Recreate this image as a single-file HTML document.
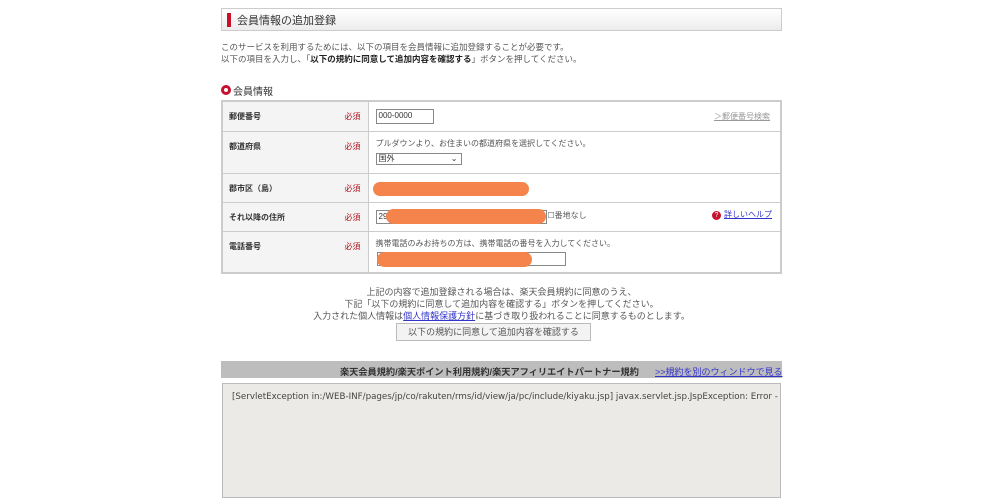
<!DOCTYPE html>
<html><head><meta charset="utf-8"><style>
*{margin:0;padding:0;box-sizing:border-box}
body{width:1000px;height:493px;background:#fff;position:relative;overflow:hidden;font-family:"Liberation Sans","Noto Sans CJK JP",sans-serif;color:#333;font-size:8.5px}
.a{position:absolute;white-space:nowrap}
.hdr{left:221px;top:8px;width:561px;height:23px;border:1px solid #ccc;background:linear-gradient(#fff,#ececec);}
.hdr i{position:absolute;left:5px;top:4px;width:4px;height:14px;background:#c8102e}
.hdr span{position:absolute;left:15px;top:3px;font-size:11px;color:#333}
table{position:absolute;left:221px;top:100px;width:561px;border-collapse:collapse;border:2px solid #ccc;table-layout:fixed}
td{border:1px solid #ccc;vertical-align:top;font-size:8px;line-height:10px}
td.l{background:#f4f4f4;width:146px;padding:10px 6px 0;font-weight:bold;position:relative}
td.l b{position:absolute;right:7px;color:#b0121f;font-weight:normal}
td.r{padding:4px 7px 0;position:relative}
.blob{position:absolute;background:#f4844c;border-radius:8px}
.inp{position:absolute;border:1px solid #888;background:#fff;font-size:8px;padding:1px 2px}
</style></head><body>
<div class="a hdr"><i></i><span>会員情報の追加登録</span></div>
<div class="a" style="left:221px;top:41px;color:#555">このサービスを利用するためには、以下の項目を会員情報に追加登録することが必要です。</div>
<div class="a" style="left:221px;top:53px;color:#555">以下の項目を入力し、「<b style="color:#222">以下の規約に同意して追加内容を確認する</b>」ボタンを押してください。</div>
<div class="a" style="left:221px;top:85px;width:10px;height:10px;border-radius:50%;border:3px solid #c8102e"></div>
<div class="a" style="left:233px;top:83px;font-size:10px;color:#333">会員情報</div>
<table>
<tr style="height:30px"><td class="l">郵便番号<b>必須</b></td><td class="r"><div class="inp" style="left:7px;top:7px;width:58px;height:15px">000-0000</div><span class="a" style="right:10px;top:10px;color:#999;text-decoration:underline">＞郵便番号検索</span></td></tr>
<tr style="height:42px"><td class="l">都道府県<b>必須</b></td><td class="r"><div style="color:#555;margin-top:3px">プルダウンより、お住まいの都道府県を選択してください。</div><div class="inp" style="left:7px;top:21px;width:86px;height:12px;padding:0 2px;font-size:8px;line-height:10px">国外<span style="position:absolute;right:3px">⌄</span></div></td></tr>
<tr style="height:29px"><td class="l">郡市区（島）<b>必須</b></td><td class="r"><div class="blob" style="left:4px;top:8px;width:156px;height:14px"></div></td></tr>
<tr style="height:29px"><td class="l">それ以降の住所<b>必須</b></td><td class="r"><div class="inp" style="left:7px;top:7px;width:171px;height:14px">29</div><div class="blob" style="left:17px;top:6px;width:160px;height:15px"></div><span class="a" style="left:179px;top:8px;color:#555">☐番地なし</span><span class="a" style="right:8px;top:7px;color:#33c;text-decoration:underline"><span style="display:inline-block;width:9px;height:9px;border-radius:50%;background:#c8102e;color:#fff;font-size:7px;text-align:center;line-height:9px;text-decoration:none;margin-right:3px">?</span>詳しいヘルプ</span></td></tr>
<tr style="height:42px"><td class="l">電話番号<b>必須</b></td><td class="r"><div style="color:#555;margin-top:3px">携帯電話のみお持ちの方は、携帯電話の番号を入力してください。</div><div class="inp" style="left:8px;top:20px;width:189px;height:14px"></div><div class="blob" style="left:8px;top:20px;width:155px;height:15px"></div></td></tr>
</table>
<div class="a" style="left:221px;width:561px;top:286px;text-align:center;color:#555;line-height:12px;font-size:9px">上記の内容で追加登録される場合は、楽天会員規約に同意のうえ、<br>下記「以下の規約に同意して追加内容を確認する」ボタンを押してください。<br>入力された個人情報は<span style="color:#33c;text-decoration:underline">個人情報保護方針</span>に基づき取り扱われることに同意するものとします。</div>
<div class="a" style="left:396px;top:323px;width:195px;height:18px;border:1px solid #bbb;background:#f3f3f3;text-align:center;line-height:16px;color:#555;font-size:9px">以下の規約に同意して追加内容を確認する</div>
<div class="a" style="left:221px;top:361px;width:561px;height:17px;background:#bdbdbd"></div>
<div class="a" style="left:340px;top:364px;font-weight:bold;color:#333;font-size:9.2px">楽天会員規約/楽天ポイント利用規約/楽天アフィリエイトパートナー規約</div>
<div class="a" style="left:655px;top:365px;color:#33c;text-decoration:underline;font-size:9px">&gt;&gt;規約を別のウィンドウで見る</div>
<div class="a" style="left:222px;top:383px;width:559px;height:115px;background:#ebeae6;border:1px solid #bbb"></div>
<div class="a" style="left:232px;top:392px;color:#444;font-family:'DejaVu Sans','Noto Sans CJK JP',sans-serif;font-size:8.7px">[ServletException in:/WEB-INF/pages/jp/co/rakuten/rms/id/view/ja/pc/include/kiyaku.jsp] javax.servlet.jsp.JspException: Error -</div>
</body></html>
